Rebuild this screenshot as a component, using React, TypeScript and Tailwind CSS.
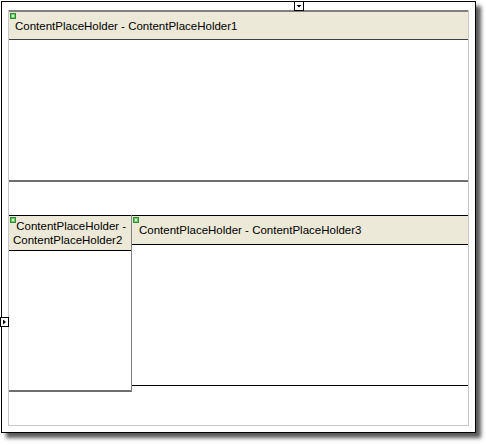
import React from 'react'

function Tag() {
  return (
    <svg width="6" height="6" viewBox="0 0 6 6" className="absolute left-[1px] top-[1px]">
      <rect x="0.5" y="0.5" width="5" height="5" fill="#6cc86c" stroke="#2f8f2f" />
      <rect x="2" y="2" width="2" height="2" fill="#d8f8d8" />
    </svg>
  )
}

function Header({ children, className }: { children: React.ReactNode; className: string }) {
  return (
    <div className={`relative bg-[#ece9d8] ${className}`}>
      <Tag />
      {children}
    </div>
  )
}

export default function App() {
  return (
    <div className="relative h-[445px] w-[486px] bg-white font-['Liberation_Sans',Arial,sans-serif] text-[11.5px] text-black">
      {/* page frame */}
      <div className="ml-[1px] mt-[1px] h-[432px] w-[475px] border border-black bg-white pl-[6px] pt-[8px] shadow-[5px_5px_4px_rgba(0,0,0,0.65)]">
        <div className="flex h-[416px] w-[461px] flex-col border-x border-b border-[#c8c8c8]">
          {/* ContentPlaceHolder1 */}
          <Header className="h-[30px] border-t-2 border-b border-t-[#808080] border-b-[#404040] pl-[6px] pt-[6px]">
            ContentPlaceHolder - ContentPlaceHolder1
          </Header>
          <div className="h-[142px] border-b-2 border-[#6e6e6e]" />
          <div className="h-[33px]" />
          <div className="flex">
            {/* ContentPlaceHolder2 */}
            <div className="flex w-[123px] flex-col border-r border-[#808080]">
              <Header className="h-[36px] border-t border-b border-black px-[4px] pt-[3px] leading-[14px]">
                &nbsp;ContentPlaceHolder - ContentPlaceHolder2
              </Header>
              <div className="h-[141px] border-b-2 border-[#6e6e6e]" />
            </div>
            {/* ContentPlaceHolder3 */}
            <div className="flex flex-1 flex-col">
              <Header className="h-[30px] border-t border-b border-black pl-[7px] pt-[6px]">
                ContentPlaceHolder - ContentPlaceHolder3
              </Header>
              <div className="h-[141px] border-b border-black" />
            </div>
          </div>
        </div>
      </div>

      {/* top dropdown marker */}
      <svg width="10" height="10" viewBox="0 0 10 10" className="absolute left-[294px] top-0">
        <rect x="0.5" y="0.5" width="9" height="9" fill="white" stroke="black" />
        <path d="M2.5 4 L7.5 4 L5 6.5 Z" fill="black" />
      </svg>
      {/* left marker */}
      <svg width="9" height="10" viewBox="0 0 9 10" className="absolute left-0 top-[316px]">
        <rect x="0.5" y="0.5" width="8" height="9" fill="white" stroke="black" />
        <path d="M3 2.5 L6 5 L3 7.5 Z" fill="black" />
      </svg>
    </div>
  )
}
